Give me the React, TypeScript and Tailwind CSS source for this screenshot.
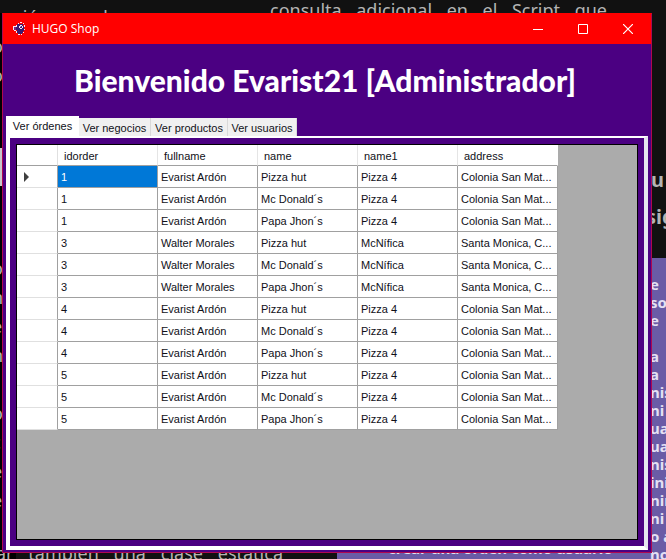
import React from "react";

const columns = ["idorder", "fullname", "name", "name1", "address"];

const shops = ["Pizza hut", "Mc Donald´s", "Papa Jhon´s"];

const orders = [
  { id: "1", fullname: "Evarist Ardón", product: "Pizza 4", address: "Colonia San Mat..." },
  { id: "3", fullname: "Walter Morales", product: "McNífica", address: "Santa Monica, C..." },
  { id: "4", fullname: "Evarist Ardón", product: "Pizza 4", address: "Colonia San Mat..." },
  { id: "5", fullname: "Evarist Ardón", product: "Pizza 4", address: "Colonia San Mat..." },
];

const rows = orders.flatMap((o) => shops.map((shop) => [o.id, o.fullname, shop, o.product, o.address]));

const tabs = [
  { label: "Ver negocios", width: "w-[72px]" },
  { label: "Ver productos", width: "w-[77px]" },
  { label: "Ver usuarios", width: "w-[69px]" },
];

function Desktop() {
  return (
    <div aria-hidden="true" className="absolute inset-0 overflow-hidden bg-[#111111] font-['Noto_Sans',sans-serif] text-[#b4b4b4]">
      <div className="absolute top-[13px] bottom-0 left-0 w-4 bg-black" />
      <div className="absolute top-[258px] right-0 bottom-0 w-[329px] bg-[#6a5ba6]" />
      <p className="absolute top-[5px] left-[14px] w-[104px] text-[18px] leading-6 [text-align-last:justify]">ción de</p>
      <p className="absolute -top-[2px] left-[270px] w-[337px] text-[18px] leading-6 [text-align-last:justify]">
        consulta adicional en el Script que
      </p>
      <p className="absolute top-[166px] left-[651px] text-[20px] leading-7 font-bold">u</p>
      <p className="absolute top-[203px] left-[646px] text-[20px] leading-7 font-bold">sig</p>
      <div className="absolute top-[275px] left-[650px] text-[15px] leading-[18px] font-bold whitespace-pre text-[#e4e0f4]">
        {"e\nso\ne\n\na\na\nnis\nni\nua\nua\nnis\nini\nnin\nni\no a\nno"}
      </div>
      <div className="absolute top-[32px] -left-[8px] text-[18px] leading-[29px] whitespace-pre">{"o\no"}</div>
      <div className="absolute top-[148px] left-0 h-[38px] w-1 bg-[#c9c5cb]" />
      <div className="absolute top-[254px] -left-[8px] text-[18px] leading-[29px] whitespace-pre">{"o\nn\ne\nn\n\no\nc\ne\ne"}</div>
      <p className="absolute top-[541px] -left-[4px] w-[287px] text-[18px] leading-6 [text-align-last:justify]">
        ar también una clase estática
      </p>
      <p className="absolute top-[539px] left-[388px] text-[15px] leading-[18px] font-bold whitespace-pre text-[#e4e0f4]">
        crear una orden como usuario
      </p>
    </div>
  );
}

function Logo() {
  return (
    <svg viewBox="0 0 14 14" className="h-[14px] w-[14px]" aria-hidden="true">
      <path d="M5 2h6v2h1v5h-1v2h-1v1H6v-1H5V8H4V4h1z" fill="#3c1a70" />
      <path
        d="M1 4h3v1H2v3h2v1H2V8H1zM4 3h1v2H4zM6 1h1v1H6zM8 0h2v1H8zM11 1h1v1h-1zM12 3h1v2h-1zM12 7h1v1h-1zM11 10h1v1h-1zM9 12h1v1H9zM6 12h2v1H6zM4 9h1v2H4zM8 3h2v1H8zM7 4h1v2H7zM10 4h1v2h-1zM8 6h2v1H8z"
        fill="#f6e6f6"
      />
      <path d="M2 5h2v3H2z" fill="#7c2a80" />
      <path d="M8 4h1v1H8z" fill="#b9a4cc" />
    </svg>
  );
}

function TitleBar() {
  return (
    <header className="flex h-[30px] shrink-0 items-center bg-[#ff0000] pl-[9px] text-white">
      <Logo />
      <span className="flex-1 pl-[6px] font-['Open_Sans',sans-serif] text-[12px] leading-4">HUGO Shop</span>
      <button type="button" aria-label="Minimizar" className="flex h-full w-[45px] items-center justify-center">
        <svg viewBox="0 0 10 10" className="h-[10px] w-[10px]"><path d="M0 5.5h10" stroke="currentColor" /></svg>
      </button>
      <button type="button" aria-label="Maximizar" className="flex h-full w-[45px] items-center justify-center">
        <svg viewBox="0 0 10 10" className="h-[10px] w-[10px]"><path d="M.5.5h9v9h-9z" fill="none" stroke="currentColor" /></svg>
      </button>
      <button type="button" aria-label="Cerrar" className="flex h-full w-[46px] items-center justify-center">
        <svg viewBox="0 0 10 10" className="h-[10px] w-[10px]"><path d="m0 0 10 10M10 0 0 10" stroke="currentColor" strokeWidth="1.2" /></svg>
      </button>
    </header>
  );
}

function OrdersTable() {
  return (
    <table className="w-[541px] table-fixed border-separate border-spacing-0 bg-white text-left">
      <colgroup>
        <col className="w-[41px]" />
        {columns.map((c) => (
          <col key={c} className="w-[100px]" />
        ))}
      </colgroup>
      <thead>
        <tr className="h-[21px]">
          <th className="border-r border-b border-r-[#e0e0e0] border-b-[#a0a0a0] p-0" />
          {columns.map((c) => (
            <th key={c} scope="col" className="border-r border-b border-r-[#e5e5e5] border-b-[#a0a0a0] pt-[2px] pr-0 pb-0 pl-[6px] font-normal last:border-r-white">
              {c}
            </th>
          ))}
        </tr>
      </thead>
      <tbody>
        {rows.map((row, r) => (
          <tr key={r} className="h-[22px]">
            <th scope="row" aria-label={`Fila ${r + 1}`} className="border-r border-b border-r-[#a0a0a0] border-b-[#e0e0e0] py-0 pr-0 pl-[7px]">
              {r === 0 && (
                <svg viewBox="0 0 5 10" className="h-[10px] w-[5px]" aria-hidden="true">
                  <path d="M0 0 5 5 0 10z" fill="#404040" />
                </svg>
              )}
            </th>
            {row.map((cell, c) => (
              <td
                key={c}
                className={
                  r === 0 && c === 0
                    ? "border-r border-b border-[#a0a0a0] bg-[#0078d7] py-0 pr-0 pl-[3px] text-white"
                    : "border-r border-b border-[#a0a0a0] py-0 pr-0 pl-[3px] whitespace-nowrap"
                }
              >
                {cell}
              </td>
            ))}
          </tr>
        ))}
      </tbody>
    </table>
  );
}

export default function App() {
  return (
    <div className="relative h-screen overflow-hidden">
      <Desktop />
      <div className="relative flex h-full pt-[13px] pr-[14px] pb-[6px] pl-[2px]">
        <main className="flex min-w-0 flex-1 flex-col border border-[#b00850] border-t-[#ff0000] bg-[#4b0082]">
          <TitleBar />
          <h1 className="flex h-[72px] shrink-0 items-center justify-center pr-1 font-['Lato',sans-serif] text-[30px] leading-9 font-black whitespace-nowrap text-white">
            Bienvenido Evarist21 [Administrador]
          </h1>
          <div className="flex min-h-0 flex-1 flex-col px-[3px] pb-[2px] font-['Liberation_Sans',Arial,sans-serif] text-[11px] leading-[14px] text-[#101018]">
            <div role="tablist" className="flex h-5 shrink-0 items-end">
              <button type="button" role="tab" aria-selected="true" className="h-5 w-[73px] bg-white">
                Ver órdenes
              </button>
              {tabs.map((t) => (
                <button
                  key={t.label}
                  type="button"
                  role="tab"
                  aria-selected="false"
                  className={`h-[18px] border-r border-[#d9d9d9] bg-[#f0f0f0] pt-[2px] whitespace-nowrap ${t.width}`}
                >
                  {t.label}
                </button>
              ))}
            </div>
            <section className="flex min-h-0 flex-1 flex-col border-4 border-t-2 border-white border-r-[#e4e4ee] p-[6px]">
              <div className="min-h-0 flex-1 border border-black bg-[#ababab]">
                <OrdersTable />
              </div>
            </section>
          </div>
        </main>
      </div>
    </div>
  );
}
